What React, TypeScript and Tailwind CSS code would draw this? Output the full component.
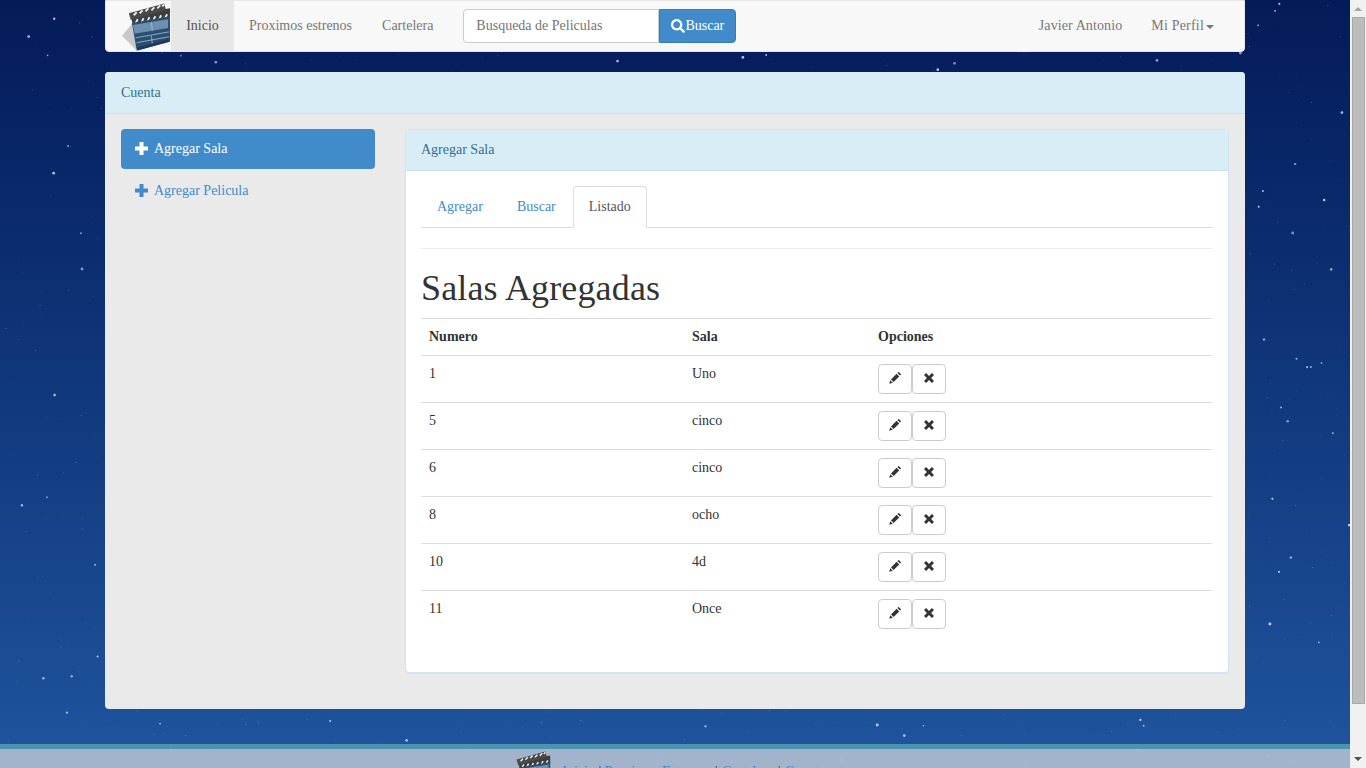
import type { ReactNode } from "react";
import { FaSearch } from "react-icons/fa";

const rooms = [
  { numero: "1", sala: "Uno" },
  { numero: "5", sala: "cinco" },
  { numero: "6", sala: "cinco" },
  { numero: "8", sala: "ocho" },
  { numero: "10", sala: "4d" },
  { numero: "11", sala: "Once" },
];

// campo de estrellas con semilla fija para que siempre salga igual
function makeStars() {
  const stars: { x: number; y: number; r: number; o: number }[] = [];
  let seed = 20240;
  const rnd = () => {
    seed = (seed * 16807) % 2147483647;
    return seed / 2147483647;
  };
  for (let i = 0; i < 1300; i++) {
    const big = rnd() > 0.8;
    stars.push({
      x: rnd() * 1350,
      y: rnd() * 768,
      r: big ? 0.8 + rnd() * 0.7 : 0.35 + rnd() * 0.25,
      o: big ? 0.55 + rnd() * 0.4 : 0.12 + rnd() * 0.25,
    });
  }
  return stars;
}

function StarField() {
  return (
    <svg className="absolute inset-0 w-full h-full" viewBox="0 0 1350 768" preserveAspectRatio="none">
      {makeStars().map((s, i) => (
        <circle key={i} cx={s.x} cy={s.y} r={s.r} fill="#cfe0ff" opacity={s.o} />
      ))}
    </svg>
  );
}

function Clapper({ className }: { className: string }) {
  return (
    <svg className={className} viewBox="0 0 50 50">
      <polygon points="0,35 10,23 15,50" fill="#c8c8c8" />
      <polygon points="9,14 49,7 49,17 11,24" fill="#3d3d3d" />
      <polygon points="7,12 43,2 45,9 9,19" fill="#4a4a4a" />
      <path d="M12 14 L15 11 M18 12 L21 9 M24 10 L27 7 M30 9 L33 6 M36 7 L39 4 M41 5 L43 3" stroke="#e8e8e8" strokeWidth="2" />
      <path d="M14 22 L16 18 M20 21 L22 17 M26 20 L28 16 M32 19 L34 15 M38 18 L40 14 M44 17 L46 13" stroke="#e8e8e8" strokeWidth="2" />
      <polygon points="10,22 49,15 49,41 15,50" fill="#2b4f73" />
      <polygon points="11,24 47,18 47,27 13,33" fill="#6d90ae" />
      <path d="M14 37 L48 31 M15 42 L48 36 M30 21 L31 30 M30 35 L31 44" stroke="#a9c0d4" strokeWidth="0.8" />
      <polygon points="15,47 48,38 48,41 16,50" fill="#1d3c5c" />
    </svg>
  );
}

function PlusIcon() {
  return (
    <svg className="w-[13px] h-[13px] shrink-0 -mt-[2px]" viewBox="0 0 13 13" fill="currentColor">
      <path d="M4.5 0 H8.5 V4.5 H13 V8.5 H8.5 V13 H4.5 V8.5 H0 V4.5 H4.5Z" />
    </svg>
  );
}

function PencilIcon() {
  return (
    <svg className="w-[12px] h-[12px] -mt-[3px]" viewBox="0 0 12 12" fill="currentColor">
      <path d="M0.3 11.7 L1.2 8.2 L3.8 10.8Z M2 7.4 L7.6 1.8 L10.2 4.4 L4.6 10Z M8.4 1 L9.2 .2 Q9.6 -.1 10 .2 L11.8 2 Q12.1 2.4 11.8 2.8 L11 3.6Z" />
    </svg>
  );
}

function RemoveIcon() {
  return (
    <svg className="w-[10px] h-[10px] -mt-[3px]" viewBox="0 0 12 12" fill="currentColor">
      <path d="M2.5 0 L6 3.5 L9.5 0 L12 2.5 L8.5 6 L12 9.5 L9.5 12 L6 8.5 L2.5 12 L0 9.5 L3.5 6 L0 2.5Z" />
    </svg>
  );
}

function OptionButton({ children }: { children: ReactNode }) {
  return (
    <button className="w-[34px] h-[30px] flex items-center justify-center bg-white border border-[#ccc] rounded text-[#333]">
      {children}
    </button>
  );
}

export default function App() {
  return (
    <div className="h-screen flex overflow-hidden font-['Liberation_Serif',serif] text-[14px] leading-[20px] text-[#333]">
      <main className="relative flex-1 overflow-hidden bg-gradient-to-b from-[#051a59] to-[#20559f]">
        <StarField />

        <div className="relative w-[1140px] mx-auto">
          {/* navbar */}
          <nav className="h-[52px] flex items-stretch bg-[#f8f8f8] border border-[#e7e7e7] rounded-b text-[#777]">
            <div className="w-[65px] pl-[16px] flex items-center">
              <Clapper className="w-[49px] h-[50px] shrink-0" />
            </div>
            <a className="w-[63px] flex items-center justify-center bg-[#e7e7e7] text-[#555]">Inicio</a>
            <a className="px-[15px] flex items-center">Proximos estrenos</a>
            <a className="px-[15px] flex items-center">Cartelera</a>
            <div className="ml-[15px] flex items-center">
              <div className="w-[196px] h-[34px] flex items-center px-[12px] bg-white border border-[#ccc] rounded-l text-[#757575]">
                Busqueda de Peliculas
              </div>
              <button className="w-[77px] h-[34px] flex items-center justify-center bg-[#428bca] border border-[#357ebd] rounded-r text-white">
                <FaSearch className="text-[14px]" />
                Buscar
              </button>
            </div>
            <div className="ml-auto flex items-center pr-[30px]">
              <a className="px-[15px] tracking-[0.1px]">Javier Antonio</a>
              <a className="pl-[14px] flex items-center tracking-[0.2px]">
                Mi Perfil
                <span className="ml-[2px] mt-[2px] w-0 h-0 border-x-[4px] border-x-transparent border-t-[4px] border-t-[#777]" />
              </a>
            </div>
          </nav>

          {/* panel principal */}
          <section className="mt-[20px] h-[637px] bg-[#eaeaea] rounded overflow-hidden">
            <div className="h-[42px] flex items-center px-[16px] bg-[#d9edf7] border-b border-[#c8e3ec] text-[#31708f]">
              Cuenta
            </div>
            <div className="flex pt-[15px] pl-[16px] pr-[16px]">
              <aside className="w-[254px] shrink-0">
                <a className="h-[40px] flex items-center gap-[6px] pl-[14px] bg-[#428bca] rounded text-white">
                  <PlusIcon />
                  Agregar Sala
                </a>
                <a className="h-[40px] mt-[2px] flex items-center gap-[6px] pl-[14px] text-[#428bca]">
                  <PlusIcon />
                  Agregar Pelicula
                </a>
              </aside>

              <div className="ml-[30px] w-[824px] h-[544px] bg-white border border-[#cfe6ee] rounded shadow-[0_1px_1px_rgba(0,0,0,0.05)]">
                <div className="h-[41px] flex items-center px-[15px] bg-[#d9edf7] border-b border-[#c8e3ec] text-[#31708f]">
                  Agregar Sala
                </div>
                <div className="px-[15px] pt-[15px]">
                  <ul className="h-[42px] flex border-b border-[#ddd]">
                    <li className="h-[41px] flex items-center px-[16px] mr-[2px] text-[#428bca]">Agregar</li>
                    <li className="h-[41px] flex items-center pl-[16px] pr-[15px] mr-[2px] text-[#428bca]">Buscar</li>
                    <li className="h-[42px] flex items-center px-[15px] bg-white border border-[#ddd] border-b-white rounded-t text-[#555]">
                      Listado
                    </li>
                  </ul>
                  <hr className="mt-[20px] border-t border-[#eee]" />
                  <h1 className="mt-[19px] text-[36px] leading-[40px] font-normal tracking-[0.15px]">Salas Agregadas</h1>
                  <table className="mt-[10px] w-[791px] border-collapse text-left">
                    <thead>
                      <tr className="h-[37px] border-y border-[#ddd]">
                        <th className="w-[263px] px-[8px] font-bold">Numero</th>
                        <th className="w-[186px] px-[8px] font-bold">Sala</th>
                        <th className="px-[8px] font-bold">Opciones</th>
                      </tr>
                    </thead>
                    <tbody>
                      {rooms.map((room) => (
                        <tr key={room.numero} className="h-[47px] border-b border-[#ddd] last:border-b-0 align-top">
                          <td className="px-[8px] pt-[8px]">{room.numero}</td>
                          <td className="px-[8px] pt-[8px]">{room.sala}</td>
                          <td className="px-[8px] pt-[8px]">
                            <div className="flex">
                              <OptionButton>
                                <PencilIcon />
                              </OptionButton>
                              <OptionButton>
                                <RemoveIcon />
                              </OptionButton>
                            </div>
                          </td>
                        </tr>
                      ))}
                    </tbody>
                  </table>
                </div>
              </div>
            </div>
          </section>
        </div>

        {/* pie */}
        <footer className="relative mt-[35px] h-[60px] bg-[#aab8cf]/95 border-t-[5px] border-[#4a94ad] flex justify-center text-[#428bca]">
          <div className="flex items-start pr-[14px]">
            <Clapper className="w-[40px] h-[40px] mt-[1px]" />
            <p className="mt-[13px] ml-[11px] whitespace-pre">
              Inicio <span className="text-[#333]">|</span> Proximos Estrenos{" "}
              <span className="text-[#333] mx-[1px]">|</span> Cartelera{" "}
              <span className="text-[#333] mx-[1px]">|</span> Cuenta
            </p>
          </div>
        </footer>
      </main>

      {/* barra de desplazamiento */}
      <div className="w-[16px] shrink-0 flex flex-col items-center bg-[#f1f1f1]">
        <span className="mt-[7px] w-0 h-0 border-x-[4px] border-x-transparent border-b-[4px] border-b-[#a3a3a3]" />
        <div className="mt-[6px] w-[13px] h-[687px] bg-[#bcbcbc] border border-[#a8a8a8]" />
        <span className="mt-[53px] w-0 h-0 border-x-[4px] border-x-transparent border-t-[4px] border-t-[#505050]" />
      </div>
    </div>
  );
}
